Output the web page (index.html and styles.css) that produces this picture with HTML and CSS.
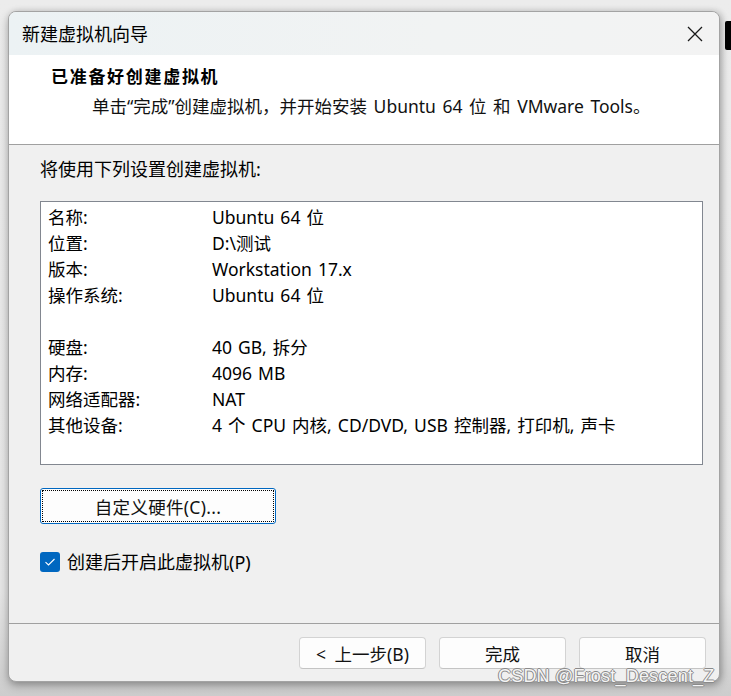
FILE: index.html
```html
<!DOCTYPE html>
<html lang="zh-CN">
<head>
<meta charset="utf-8">
<title>新建虚拟机向导</title>
<link rel="stylesheet" href="styles.css">
</head>
<body>
<div class="behind"></div>
<div class="window">
  <div class="titlebar">
    <span class="title">新建虚拟机向导</span>
    <svg class="close" width="16" height="16" viewBox="0 0 16 16"><path d="M1 1 L15 15 M15 1 L1 15" stroke="#1a1a1a" stroke-width="1.3" fill="none"/></svg>
  </div>
  <div class="header">
    <div class="heading">已准备好创建虚拟机</div>
    <div class="subtitle">单击“完成”创建虚拟机，并开始安装 Ubuntu 64 位 和 VMware Tools。</div>
  </div>
  <div class="body">
    <div class="intro">将使用下列设置创建虚拟机:</div>
    <div class="listbox">
      <div class="row"><span class="key">名称:</span><span class="val">Ubuntu 64 位</span></div>
      <div class="row"><span class="key">位置:</span><span class="val">D:\测试</span></div>
      <div class="row"><span class="key">版本:</span><span class="val">Workstation 17.x</span></div>
      <div class="row"><span class="key">操作系统:</span><span class="val">Ubuntu 64 位</span></div>
      <div class="row"><span class="key"></span><span class="val"></span></div>
      <div class="row"><span class="key">硬盘:</span><span class="val">40 GB, 拆分</span></div>
      <div class="row"><span class="key">内存:</span><span class="val">4096 MB</span></div>
      <div class="row"><span class="key">网络适配器:</span><span class="val">NAT</span></div>
      <div class="row"><span class="key">其他设备:</span><span class="val">4 个 CPU 内核, CD/DVD, USB 控制器, 打印机, 声卡</span></div>
    </div>
    <div class="custom"><span class="focus">自定义硬件(C)...</span></div>
    <label class="check">
      <span class="box"><svg width="12" height="10" viewBox="0 0 12 10"><path d="M1.5 5.2 L4.5 8 L10.5 2" stroke="#fff" stroke-width="1.1" fill="none"/></svg></span>
      <span>创建后开启此虚拟机(P)</span>
    </label>
  </div>
  <div class="footer">
    <div class="btn back">&lt; 上一步(B)</div>
    <div class="btn">完成</div>
    <div class="btn">取消</div>
  </div>
</div>
<div class="watermark">CSDN @Frost_Descent_Z</div>
</body>
</html>
```
FILE: styles.css
```css
html, body {
  margin: 0;
  padding: 0;
}
body {
  width: 731px;
  height: 696px;
  overflow: hidden;
  background: linear-gradient(to bottom, #ececec 0%, #e6e6e6 85%, #cdcdcd 100%);
  font-family: "Noto Sans", "Noto Sans CJK SC", sans-serif;
  color: #000;
  position: relative;
}
.behind {
  position: absolute;
  left: 725px;
  top: 21px;
  width: 6px;
  height: 29px;
  background: #000;
  border-radius: 2px 0 0 2px;
}
.window {
  position: relative;
  margin: 11px 0 0 8px;
  width: 712px;
  height: 671px;
  box-sizing: border-box;
  border: 1px solid #a3a3a3;
  border-radius: 8px;
  overflow: hidden;
  display: flex;
  flex-direction: column;
  background: #f0f0f0;
  box-shadow: 0 4px 10px rgba(0, 0, 0, 0.28), 2px 0 6px rgba(0,0,0,0.15);
}
.titlebar {
  height: 43px;
  flex: none;
  display: flex;
  align-items: center;
  justify-content: space-between;
  padding: 0 16px 0 13px;
  background: linear-gradient(to right, #ecf2f4 0%, #f1f3f3 60%, #f3f3f3 100%);
}
.title {
  font-size: 18px;
  color: #000;
  line-height: 24px;
}
.close {
  display: block;
}
.header {
  height: 90px;
  flex: none;
  box-sizing: border-box;
  background: #fff;
  border-bottom: 1px solid #a0a0a0;
  padding: 10px 0 0 42px;
}
.heading {
  font-size: 17px;
  font-weight: bold;
  letter-spacing: 1.7px;
  line-height: 24px;
}
.subtitle {
  margin: 5px 0 0 41px;
  font-size: 17.5px;
  word-spacing: 2px;
  line-height: 24px;
  color: #111;
}
.body {
  flex: 1;
  padding: 12px 16px 0 31px;
}
.intro {
  font-size: 18px;
  line-height: 24px;
}
.listbox {
  margin-top: 20px;
  height: 264px;
  box-sizing: border-box;
  border: 1px solid #828790;
  background: #fff;
  padding: 2px 0 0 7px;
}
.row {
  display: flex;
  height: 26px;
  line-height: 26px;
  font-size: 17.5px;
  word-spacing: 1.5px;
}
.key {
  width: 164px;
  flex: none;
}
.custom {
  margin-top: 23px;
  width: 236px;
  height: 36px;
  box-sizing: border-box;
  border: 1px solid #0067c0;
  border-radius: 3px;
  background: #fdfdfd;
  padding: 1px;
  display: flex;
}
.focus {
  flex: 1;
  border: 1px dotted #000;
  display: flex;
  align-items: center;
  justify-content: center;
  font-size: 17.5px;
  letter-spacing: 0.3px;
  color: #111;
}
.check {
  margin-top: 28px;
  display: flex;
  align-items: center;
  gap: 7px;
  font-size: 18px;
  line-height: 20px;
}
.box {
  width: 20px;
  height: 20px;
  border-radius: 3px;
  background: #0067c0;
  display: flex;
  align-items: center;
  justify-content: center;
}
.footer {
  height: 58px;
  flex: none;
  box-sizing: border-box;
  border-top: 1px solid #a0a0a0;
  padding: 13px 13px 0 0;
  display: flex;
  justify-content: flex-end;
  gap: 13px;
}
.btn {
  width: 127px;
  height: 32px;
  box-sizing: border-box;
  border: 1px solid #d3d3d3;
  border-bottom-color: #c4c4c4;
  border-radius: 4px;
  background: #fdfdfd;
  display: flex;
  align-items: center;
  justify-content: center;
  font-size: 17.5px;
  color: #111;
}
.back {
  word-spacing: 4px;
}
.watermark {
  position: absolute;
  left: 498px;
  top: 665px;
  font-family: "Liberation Sans", Arial, sans-serif;
  font-size: 18px;
  line-height: 22px;
  letter-spacing: 0.2px;
  color: #f4f4f4;
  text-shadow: 1px 0 0 #8a8a8a, -1px 0 0 #8a8a8a, 0 1px 0 #8a8a8a, 0 -1px 0 #8a8a8a;
  white-space: nowrap;
}
```
